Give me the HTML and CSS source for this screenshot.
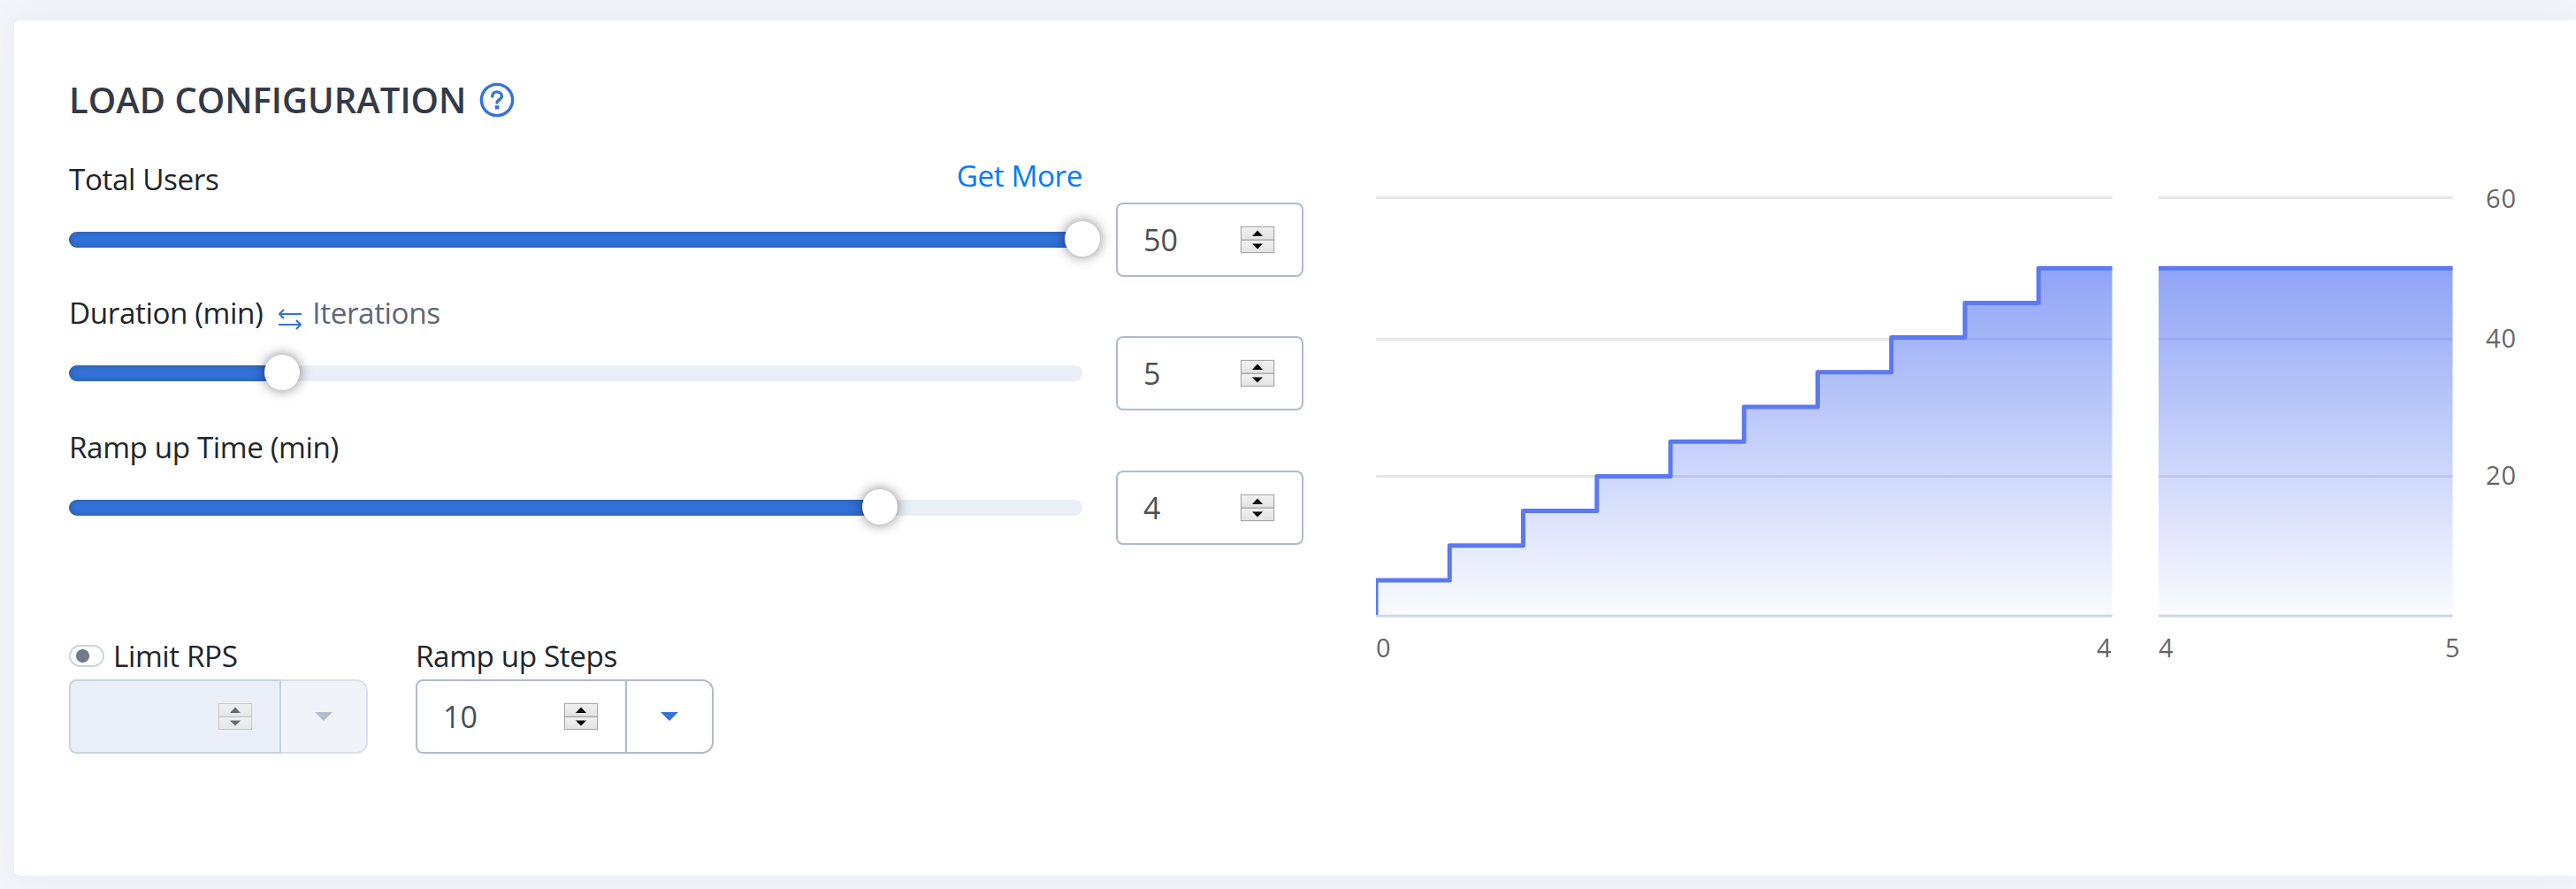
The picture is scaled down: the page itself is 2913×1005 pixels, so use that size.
FILE: index.html
```html
<!DOCTYPE html>
<html lang="en">
<head>
<meta charset="utf-8">
<title>Load Configuration</title>
<link rel="stylesheet" href="styles.css">
</head>
<body>
<svg class="defs" width="0" height="0" aria-hidden="true">
  <defs>
    <linearGradient id="btn" x1="0" y1="0" x2="0" y2="1"><stop offset="0" stop-color="#f1f1f1"/><stop offset="1" stop-color="#e3e3e3"/></linearGradient>
    <symbol id="spinner" viewBox="0 0 40 32">
      <rect width="40" height="32" fill="#efefef"/>
      <rect x="1.5" y="1.5" width="37" height="14.5" fill="url(#btn)" stroke="#a9a9a9"/>
      <rect x="1.5" y="16.5" width="37" height="14" fill="url(#btn)" stroke="#a9a9a9"/>
      <path d="M14 12L20 5.500L26 12zM14 20.500H26L20 26.500z" fill="#000"/>
    </symbol>
  </defs>
</svg>
<main class="card">
  <section class="settings">
    <h1 class="title">LOAD CONFIGURATION
      <svg class="help" viewBox="0 0 40 40"><circle cx="20" cy="20" r="17.600"/><path d="M14.700 16c0-3 2.300-5.100 5.300-5.100s5.400 2 5.400 4.900c0 4.100-5.400 4.200-5.400 7.200"/><rect class="dot" x="17.700" y="26.300" width="4.800" height="4.300" rx="1"/></svg>
    </h1>
    <div class="row">
      <div class="control">
        <div class="label"><span>Total Users</span><a class="more">Get More</a></div>
        <div class="track"><div class="fill" style="width:100%"><span class="handle"></span></div></div>
      </div>
      <div class="number"><span>50</span><svg class="spinner"><use href="#spinner"/></svg></div>
    </div>
    <div class="row">
      <div class="control">
        <div class="label"><span>Duration (min)</span>
          <svg class="swap" viewBox="0 0 26 24"><path d="M26 6H1M6 1L1 6l5 5M0 18h25M20 13l5 5-5 5"/></svg>
          <span class="alt">Iterations</span></div>
        <div class="track"><div class="fill" style="width:21.05%"><span class="handle"></span></div></div>
      </div>
      <div class="number"><span>5</span><svg class="spinner"><use href="#spinner"/></svg></div>
    </div>
    <div class="row">
      <div class="control">
        <div class="label"><span>Ramp up Time (min)</span></div>
        <div class="track"><div class="fill" style="width:80%"><span class="handle"></span></div></div>
      </div>
      <div class="number"><span>4</span><svg class="spinner"><use href="#spinner"/></svg></div>
    </div>
    <div class="extras">
      <div class="field">
        <div class="label"><span class="toggle"></span><span>Limit RPS</span></div>
        <div class="combo disabled">
          <div class="number"><span></span><svg class="spinner"><use href="#spinner"/></svg></div>
          <div class="drop"><span class="caret"></span></div>
        </div>
      </div>
      <div class="field">
        <div class="label"><span>Ramp up Steps</span></div>
        <div class="combo">
          <div class="number"><span>10</span><svg class="spinner"><use href="#spinner"/></svg></div>
          <div class="drop"><span class="caret"></span></div>
        </div>
      </div>
    </div>
  </section>
  <svg class="chart" width="1357" height="600" viewBox="0 0 1357 600">
    <defs>
      <linearGradient id="area" gradientUnits="userSpaceOnUse" x1="0" y1="126" x2="0" y2="519">
        <stop offset="0" stop-color="#5b79f2" stop-opacity=".68"/><stop offset="1" stop-color="#5b79f2" stop-opacity=".03"/>
      </linearGradient>
      <clipPath id="ramp"><rect x="0" y="0" width="832.500" height="518"/></clipPath>
      <clipPath id="hold"><rect x="885" y="0" width="332.500" height="518"/></clipPath>
    </defs>
    <path class="grid" d="M0 46.500H832.500M885 46.500H1217.500M0 206.500H832.500M885 206.500H1217.500M0 361.500H832.500M885 361.500H1217.500"/>
    <path fill="url(#area)" d="M0 519V479H83.250V439.800H166.500V400.600H249.750V361.400H333V322.200H416.250V283H499.500V243.800H582.750V204.600H666V165.400H749.250V126.200H832.500V519z"/>
    <path fill="url(#area)" d="M885 126.200H1217.500V519H885z"/>
    <path class="axis" d="M0 519.300H832.500M885 519.300H1217.500"/>
    <path class="line" clip-path="url(#ramp)" d="M0 519V479H83.250V439.800H166.500V400.600H249.750V361.400H333V322.200H416.250V283H499.500V243.800H582.750V204.600H666V165.400H749.250V126.200H840"/>
    <path class="line" clip-path="url(#hold)" d="M880 126.200H1225"/>
    <g class="ticks">
      <text x="1255" y="58">60</text><text x="1255" y="216">40</text><text x="1255" y="371">20</text>
      <text x="0" y="566">0</text><text x="815" y="566">4</text><text x="885" y="566">4</text><text x="1209" y="566">5</text>
    </g>
  </svg>
</main>
</body>
</html>
```
FILE: styles.css
```css
* { box-sizing: border-box; }

body {
  margin: 0;
  height: 1005px;
  overflow: hidden;
  background: #f3f5f9;
  color: #212529;
  font-family: "Open Sans", sans-serif;
  font-size: 34px;
}

.defs { display: block; height: 0; }

.card {
  display: flex;
  gap: 82px;
  height: 967px;
  margin: 23px 0 0 16px;
  padding: 58px 0 0 62px;
  border-radius: 7px 0 0 7px;
  background: #fff;
  box-shadow: 0 0 40px rgba(70, 100, 130, .07);
}

.settings { flex: none; width: 1396px; }

.title {
  display: flex;
  align-items: center;
  gap: 15px;
  height: 64px;
  margin: 0 0 32px;
  color: #343a46;
  font-size: 40px;
  font-weight: 600;
  line-height: 64px;
}

.help { width: 40px; height: 40px; fill: none; stroke: #3273dc; stroke-width: 3.4; stroke-linecap: round; }
.help .dot { fill: #3273dc; stroke: none; }

.row {
  display: flex;
  justify-content: space-between;
  height: 151px;
}

.row + .row { height: 152px; }

.control { width: 1146px; }

.label {
  display: flex;
  height: 50px;
  font-size: 33.3px;
  letter-spacing: -.43px;
  line-height: 50px;
  white-space: nowrap;
}

.more { margin-left: auto; color: #007bff; line-height: 42px; }
.alt { color: #5d6678; }

.swap {
  width: 26px;
  height: 24px;
  margin: 21px 12px 0 18px;
  fill: none;
  stroke: #3273dc;
  stroke-width: 2.2;
}

.track {
  height: 18px;
  margin-top: 35px;
  border-radius: 9px;
  background: #eaeef6;
}

.fill {
  position: relative;
  height: 18px;
  border-radius: 9px;
  background: #3273dc;
  box-shadow: inset 0 0 8px rgba(50, 60, 90, .5);
}

.handle {
  position: absolute;
  top: -12px;
  right: -20px;
  width: 40px;
  height: 40px;
  border-radius: 50%;
  background: #fff;
  box-shadow: 0 0 14px rgba(0, 0, 0, .5);
}

.number {
  display: flex;
  align-items: center;
  justify-content: space-between;
  width: 212px;
  height: 84px;
  padding: 0 30px 0 29px;
  border: 2px solid #aebad0;
  border-radius: 8px;
  color: #495057;
  line-height: 46px;
}

.row .number { margin-top: 52px; }
.spinner { width: 40px; height: 32px; }

.extras { display: flex; gap: 54px; margin-top: 84px; }

.toggle {
  width: 40px;
  height: 25px;
  margin: 13px 10px 0 0;
  border: 2px solid #c9d3e5;
  border-radius: 13px;
  background: radial-gradient(circle at 13.5px 10.5px, #717a8d 7px, transparent 8px);
}

.combo { display: flex; margin-top: 2px; }
.combo .number { width: 239px; border-radius: 8px 0 0 8px; }

.drop {
  display: flex;
  align-items: center;
  justify-content: center;
  width: 98px;
  height: 84px;
  border: 2px solid #aebad0;
  border-left: 0;
  border-radius: 0 13px 13px 0;
}

.caret {
  border: 10px solid transparent;
  border-top-color: #3273dc;
  border-bottom: 0;
}

.disabled .number { width: 240px; border-color: #c8d2e4; background: #eaeef6; }
.disabled .spinner { opacity: .55; }
.disabled .drop { border-color: #dae0ec; background: #f0f4f8; }
.disabled .caret { border-top-color: #b5bdcc; }

.chart { flex: none; margin-top: 96px; }
.grid { fill: none; stroke: #e6e6e6; stroke-width: 3; }
.axis { fill: none; stroke: #ccd6eb; stroke-width: 3; }
.line { fill: none; stroke: #5b79f2; stroke-width: 5; stroke-linejoin: round; }
.ticks { fill: #666; font-size: 29px; letter-spacing: .9px; }
```
